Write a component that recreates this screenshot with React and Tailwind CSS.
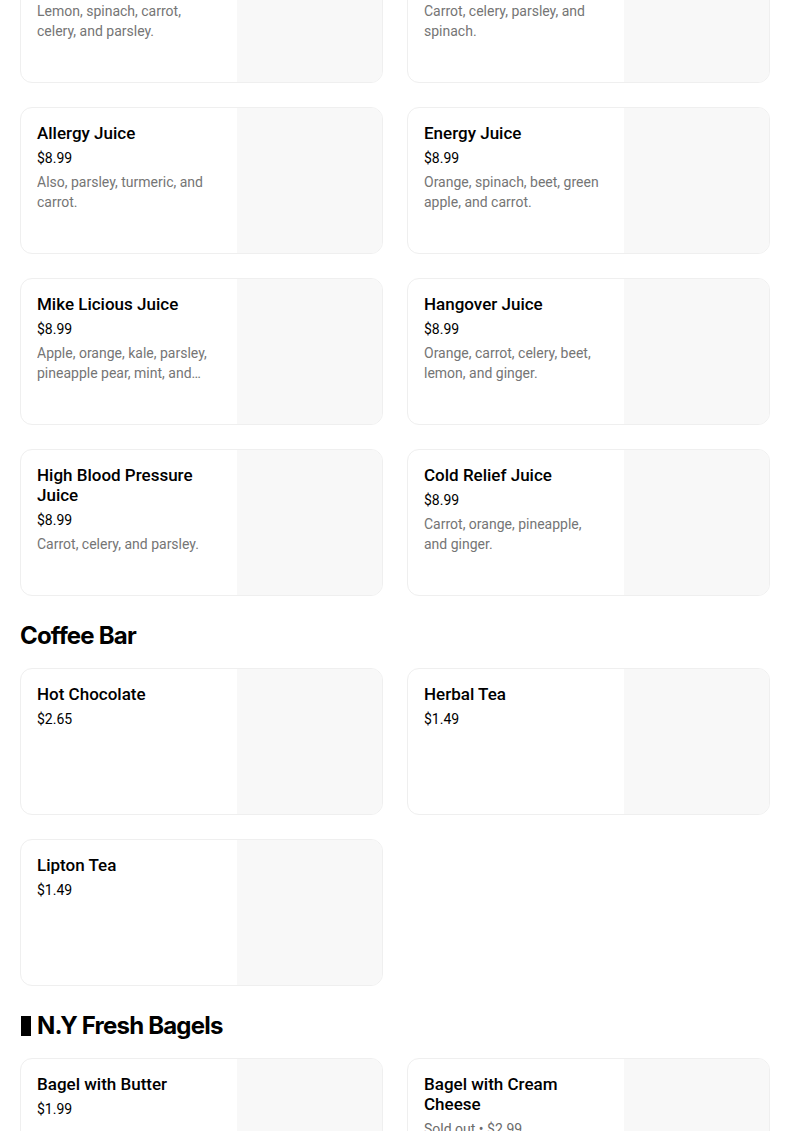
import React from "react";

const juices = [
  { name: "Detox Juice", price: "$8.99", desc: "Lemon, spinach, carrot, celery, and parsley." },
  { name: "Vision Juice", price: "$8.99", desc: "Carrot, celery, parsley, and spinach." },
  { name: "Allergy Juice", price: "$8.99", desc: "Also, parsley, turmeric, and carrot." },
  { name: "Energy Juice", price: "$8.99", desc: "Orange, spinach, beet, green apple, and carrot." },
  { name: "Mike Licious Juice", price: "$8.99", desc: "Apple, orange, kale, parsley, pineapple pear, mint, and ginger." },
  { name: "Hangover Juice", price: "$8.99", desc: "Orange, carrot, celery, beet, lemon, and ginger." },
  { name: "High Blood Pressure Juice", price: "$8.99", desc: "Carrot, celery, and parsley." },
  { name: "Cold Relief Juice", price: "$8.99", desc: "Carrot, orange, pineapple, and ginger." },
];

const coffee = [
  { name: "Hot Chocolate", price: "$2.65" },
  { name: "Herbal Tea", price: "$1.49" },
  { name: "Lipton Tea", price: "$1.49" },
];

const bagels = [
  { name: "Bagel with Butter", price: "$1.99" },
  { name: "Bagel with Cream Cheese", price: "$2.99", soldOut: true },
];

const ItemCard = ({ item }) => (
  <div className="flex h-[147px] overflow-hidden rounded-xl border border-[#efefef] bg-white">
    <div className="w-[216px] shrink-0 pt-[15px] pr-5 pl-4">
      <div className="text-[17px] leading-5 font-medium text-black">{item.name}</div>
      <div className="mt-[5px] text-[14px] leading-5 text-black">
        {item.soldOut ? (
          <span className="text-[#6b6b6b]">Sold out • {item.price}</span>
        ) : (
          item.price
        )}
      </div>
      {item.desc && (
        <div className="mt-1 line-clamp-2 text-[14px] leading-5 text-[#757575]">{item.desc}</div>
      )}
    </div>
    <div className="flex-1 bg-[#f8f8f8]" />
  </div>
);

const Section = ({ title, items, bar }) => (
  <div>
    {title && (
      <h2
        className="mt-6 mb-4 flex items-center text-[24px] leading-8 font-bold tracking-[-0.8px] text-black"
        style={{ fontFamily: "Inter, 'Liberation Sans', sans-serif" }}
      >
        {bar && <span className="mr-[6px] ml-[1px] inline-block h-[20px] w-[10px] bg-black" />}
        {title}
      </h2>
    )}
    <div className="grid grid-cols-2 gap-6">
      {items.map((item) => (
        <ItemCard key={item.name} item={item} />
      ))}
    </div>
  </div>
);

export default function App() {
  return (
    <div className="min-h-screen overflow-hidden bg-white" style={{ fontFamily: "Roboto, 'Liberation Sans', sans-serif" }}>
      <div className="-mt-[64px] w-[790px] pl-5 pr-[20px]">
        <Section items={juices} />
        <Section title="Coffee Bar" items={coffee} />
        <Section title="N.Y Fresh Bagels" items={bagels} bar />
      </div>
    </div>
  );
}
